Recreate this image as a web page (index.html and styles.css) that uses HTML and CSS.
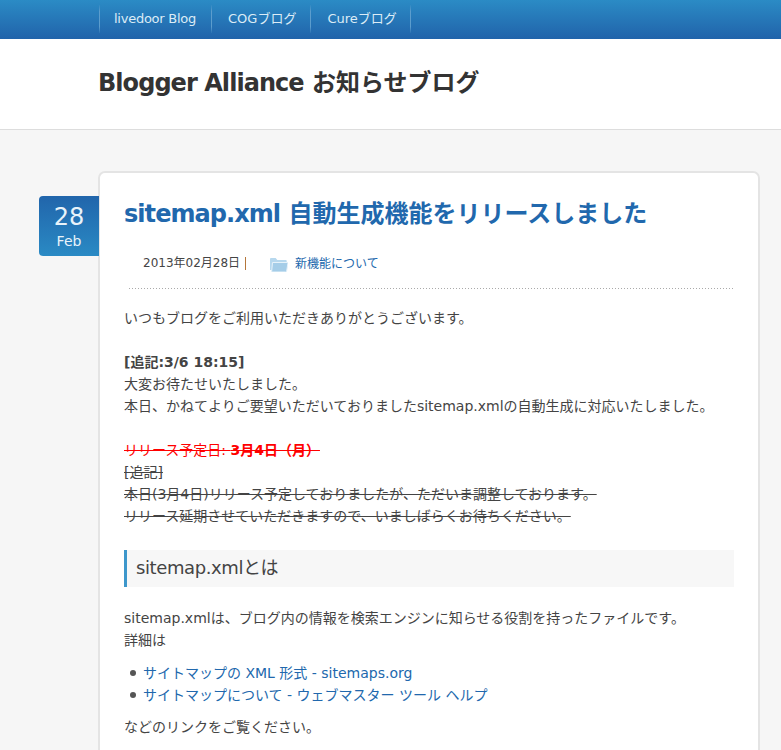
FILE: index.html
```html
<!DOCTYPE html>
<html lang="ja">
<head>
<meta charset="utf-8">
<title>Blogger Alliance お知らせブログ</title>
<link rel="stylesheet" href="styles.css">
</head>
<body>
<nav class="topnav">
  <ul class="navlist">
    <li><a href="#">livedoor Blog</a></li>
    <li><a href="#">COGブログ</a></li>
    <li><a href="#">Cureブログ</a></li>
  </ul>
</nav>
<header class="masthead">
  <h1 class="sitetitle"><span class="latin">Blogger Alliance</span> お知らせブログ</h1>
</header>
<main class="content">
  <article class="card">
    <div class="datebox"><span class="day">28</span><span class="month">Feb</span></div>
    <h2 class="posttitle"><a href="#"><span class="latin">sitemap.xml</span> 自動生成機能をリリースしました</a></h2>
    <div class="meta">
      <span class="postdate">2013年02月28日</span>
      <svg class="foldericon" width="18" height="14" viewBox="0 0 18 14"><path d="M0 1.2C0 .5.5 0 1.1 0h4.6l1.6 2h8.4c.6 0 1 .4 1 1v9H0z" fill="#b7d8ee"/><path d="M2.5 4.5h14.6c.5 0 .9.4.8.9l-1.2 7.7c-.1.5-.5.9-1 .9H1.6z" fill="#a5cde8" stroke="#e6f2fa" stroke-width="1"/></svg>
      <a class="category" href="#">新機能について</a>
    </div>
    <div class="postbody">
      <p>いつもブログをご利用いただきありがとうございます。</p>
      <p><strong>[追記:3/6 18:15]</strong><br>大変お待たせいたしました。<br>本日、かねてよりご要望いただいておりましたsitemap.xmlの自動生成に対応いたしました。</p>
      <p class="struck"><s class="red">リリース予定日: <strong>3月4日（月）</strong></s><br><s>[追記]</s><br><s>本日(3月4日)リリース予定しておりましたが、ただいま調整しております。</s><br><s>リリース延期させていただきますので、いましばらくお待ちください。</s></p>
      <h3 class="subhead">sitemap.xmlとは</h3>
      <p class="lead">sitemap.xmlは、ブログ内の情報を検索エンジンに知らせる役割を持ったファイルです。<br>詳細は</p>
      <ul class="links">
        <li><a href="#">サイトマップの XML 形式 - sitemaps.org</a></li>
        <li><a href="#">サイトマップについて - ウェブマスター ツール ヘルプ</a></li>
      </ul>
      <p>などのリンクをご覧ください。</p>
    </div>
  </article>
</main>
</body>
</html>
```

FILE: styles.css
```css
* { box-sizing: border-box; }
html, body { margin: 0; padding: 0; height: 750px; overflow: hidden; }
body {
  background: #f6f6f6;
  color: #444;
  font-family: "DejaVu Sans", "Noto Sans CJK JP", sans-serif;
  font-size: 14px;
  line-height: 22px;
}
a { color: #2168ad; text-decoration: none; }
.latin { letter-spacing: -0.95px; }
.topnav {
  height: 39px;
  padding-left: 99px;
  background: linear-gradient(#2b8bc5, #2163aa);
}
.navlist {
  display: flex;
  list-style: none;
  margin: 0;
  padding: 5px 0 0;
}
.navlist li {
  height: 28px;
  border-style: solid;
  border-width: 0 1px 0 0;
  border-image: linear-gradient(transparent, #5c9dcd 25%, #5c9dcd 75%, transparent) 1;
}
.navlist li:first-child { border-left-width: 1px; }
.navlist a {
  display: block;
  padding: 0 15px 0 16px;
  color: #dcecf6;
  font-size: 13px;
  line-height: 28px;
}
.navlist li:first-child a { padding-left: 14px; letter-spacing: -0.25px; }
.navlist li:nth-child(2) a { padding-right: 14px; }
.navlist li:nth-child(3) a { padding-right: 13px; }
.masthead {
  height: 91px;
  background: #fff;
  border-bottom: 1px solid #ddd;
  padding-left: 98px;
}
.sitetitle {
  margin: 0;
  padding-top: 28px;
  color: #333;
  font-size: 24px;
  line-height: 32px;
  font-weight: 700;
}
.content {
  padding: 41px 21px 0 98px;
}
.card {
  position: relative;
  height: 700px;
  background: #fff;
  border: 2px solid #e4e4e4;
  border-radius: 7px;
  padding: 0 24px;
}
.datebox {
  position: absolute;
  left: -61px;
  top: 23px;
  width: 60px;
  height: 60px;
  display: flex;
  flex-direction: column;
  align-items: center;
  padding-top: 6px;
  border-radius: 4px 0 0 4px;
  background: linear-gradient(#2165ab, #2a8ac4);
  color: #e8f3fa;
}
.day { font-size: 24px; line-height: 30px; }
.month { font-size: 14px; line-height: 18px; }
.posttitle {
  margin: 0;
  padding-top: 23px;
  font-size: 24px;
  line-height: 36px;
  font-weight: 700;
}
.meta {
  display: flex;
  align-items: center;
  margin: 20px 0 0 5px;
  padding: 0 0 14px 14px;
  height: 37px;
  background: linear-gradient(to right, #aaa 1px, transparent 1px) 0 100% / 3px 1px repeat-x;
  font-size: 12px;
  line-height: 22px;
}
.postdate {
  padding-right: 5px;
  border-right: 1px solid #b5763a;
  line-height: 13px;
}
.foldericon { margin: 2px 7px 0 24px; }
.postbody { padding-top: 18px; }
.postbody p { margin: 0 0 22px; }
.postbody .struck { margin-bottom: 23px; }
.postbody .lead { margin-bottom: 11px; }
.red { color: #f00; }
.subhead {
  margin: 0 0 20px;
  height: 37px;
  padding-left: 9px;
  background: #f7f7f7;
  border-left: 3px solid #3d97cb;
  font-size: 18px;
  font-weight: 400;
  line-height: 36px;
  letter-spacing: -0.4px;
}
.links { margin: 0 0 10px; padding: 0 0 0 6px; list-style: none; }
.links li { display: flex; align-items: center; }
.links li::before {
  content: "";
  width: 6px;
  height: 6px;
  margin-right: 7px;
  border-radius: 50%;
  background: #555;
}
```
